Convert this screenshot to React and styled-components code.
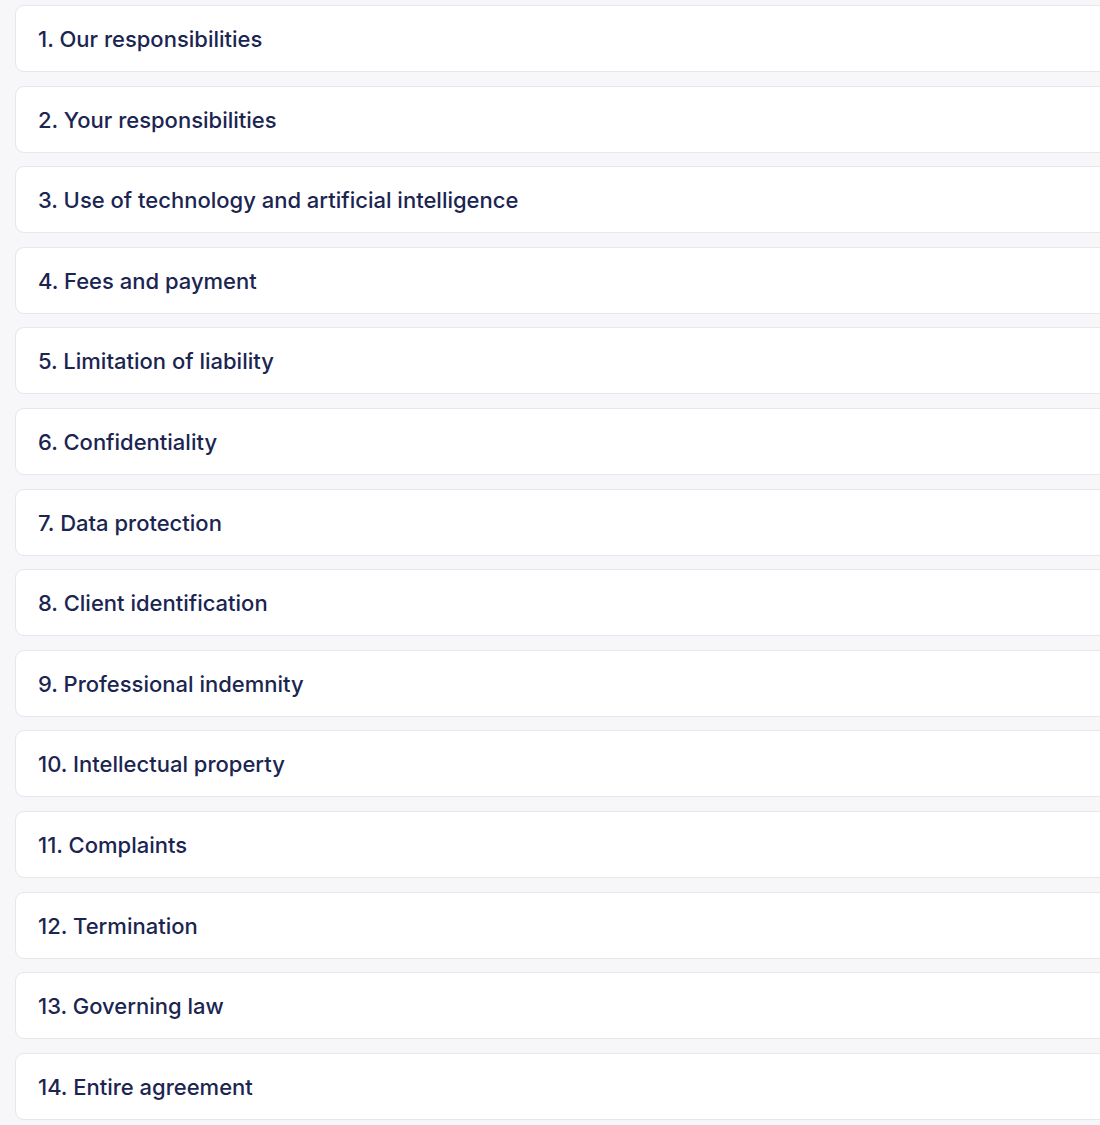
import styled, { createGlobalStyle } from "styled-components";

const sections = [
  "1. Our responsibilities",
  "2. Your responsibilities",
  "3. Use of technology and artificial intelligence",
  "4. Fees and payment",
  "5. Limitation of liability",
  "6. Confidentiality",
  "7. Data protection",
  "8. Client identification",
  "9. Professional indemnity",
  "10. Intellectual property",
  "11. Complaints",
  "12. Termination",
  "13. Governing law",
  "14. Entire agreement",
];

const GlobalStyle = createGlobalStyle`
  html, body {
    margin: 0;
    padding: 0;
    background: #f7f7f9;
  }
  body {
    font-family: Inter, "Noto Sans", sans-serif;
  }
`;

const Page = styled.div`
  width: 1100px;
  height: 1125px;
  overflow: hidden;
`;

const List = styled.div`
  display: flex;
  flex-direction: column;
  gap: 13.6px;
  padding: 5px 0 0 15px;
  margin-right: -20px;
`;

const Section = styled.div`
  display: flex;
  align-items: center;
  box-sizing: border-box;
  height: 67px;
  padding: 1px 22px 0;

  background-color: #fff;
  border: 1.5px solid #e6e6ec;
  border-radius: 9px;

  cursor: pointer;
`;

const Title = styled.span`
  font-size: 22px;
  font-weight: 500;
  color: #1b2551;
`;

function App() {
  return (
    <Page>
      <GlobalStyle />
      <List>
        {sections.map((title) => (
          <Section key={title}>
            <Title>{title}</Title>
          </Section>
        ))}
      </List>
    </Page>
  );
}

export default App;
